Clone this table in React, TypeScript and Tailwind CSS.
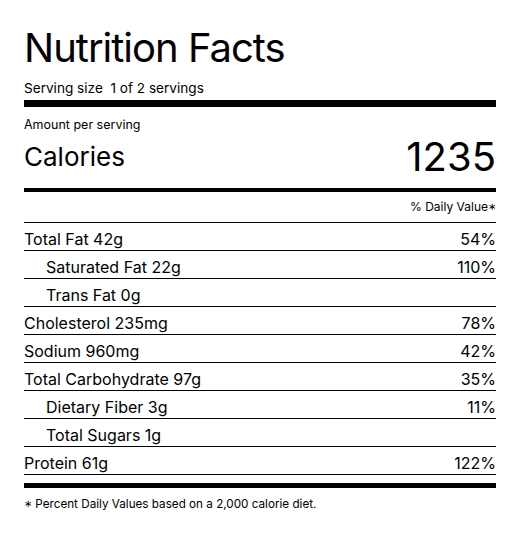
const rows = [
  { label: "Total Fat 42g", dv: "54%" },
  { label: "Saturated Fat 22g", dv: "110%", sub: true },
  { label: "Trans Fat 0g", dv: "", sub: true },
  { label: "Cholesterol 235mg", dv: "78%" },
  { label: "Sodium 960mg", dv: "42%" },
  { label: "Total Carbohydrate 97g", dv: "35%" },
  { label: "Dietary Fiber 3g", dv: "11%", sub: true },
  { label: "Total Sugars 1g", dv: "", sub: true },
  { label: "Protein 61g", dv: "122%" },
];

export default function App() {
  return (
    <div className="min-h-screen bg-white text-black font-['Inter',sans-serif]">
      <div className="w-[520px] px-6 pt-6">
        {/* Header */}
        <h1 className="text-[40px] leading-[48px] tracking-tight">Nutrition Facts</h1>
        <p className="text-[13.6px] leading-5 mt-[6px]">Serving size&nbsp; 1 of 2 servings</p>
        <div className="h-[7px] bg-black mt-[2px]" />

        {/* Calories */}
        <p className="text-[12.5px] leading-4 mt-[10px]">Amount per serving</p>
        <div className="flex items-center justify-between h-[48px]">
          <span className="text-[26px] leading-none">Calories</span>
          <span className="text-[40px] leading-none">1235</span>
        </div>
        <div className="h-[4px] bg-black mt-[7px]" />

        <div className="flex justify-end items-center h-[31px] border-b border-black pb-[1px]">
          <span className="text-xs">% Daily Value<span className="text-[10px] align-[1px]">&#8727;</span></span>
        </div>

        {/* Nutrients */}
        {rows.map((r) => (
          <div key={r.label} className="flex justify-between items-center h-[28px] border-b border-black text-base pt-1">
            <span className={r.sub ? "pl-[22px]" : ""}>{r.label}</span>
            <span>{r.dv}</span>
          </div>
        ))}

        <div className="h-[5px] bg-black mt-[8px]" />
        <p className="text-[11.7px] leading-4 mt-[7px]">
          <span className="text-[10px] align-[1px]">&#8727;</span> Percent Daily Values based on a 2,000 calorie diet.
        </p>
      </div>
    </div>
  );
}
